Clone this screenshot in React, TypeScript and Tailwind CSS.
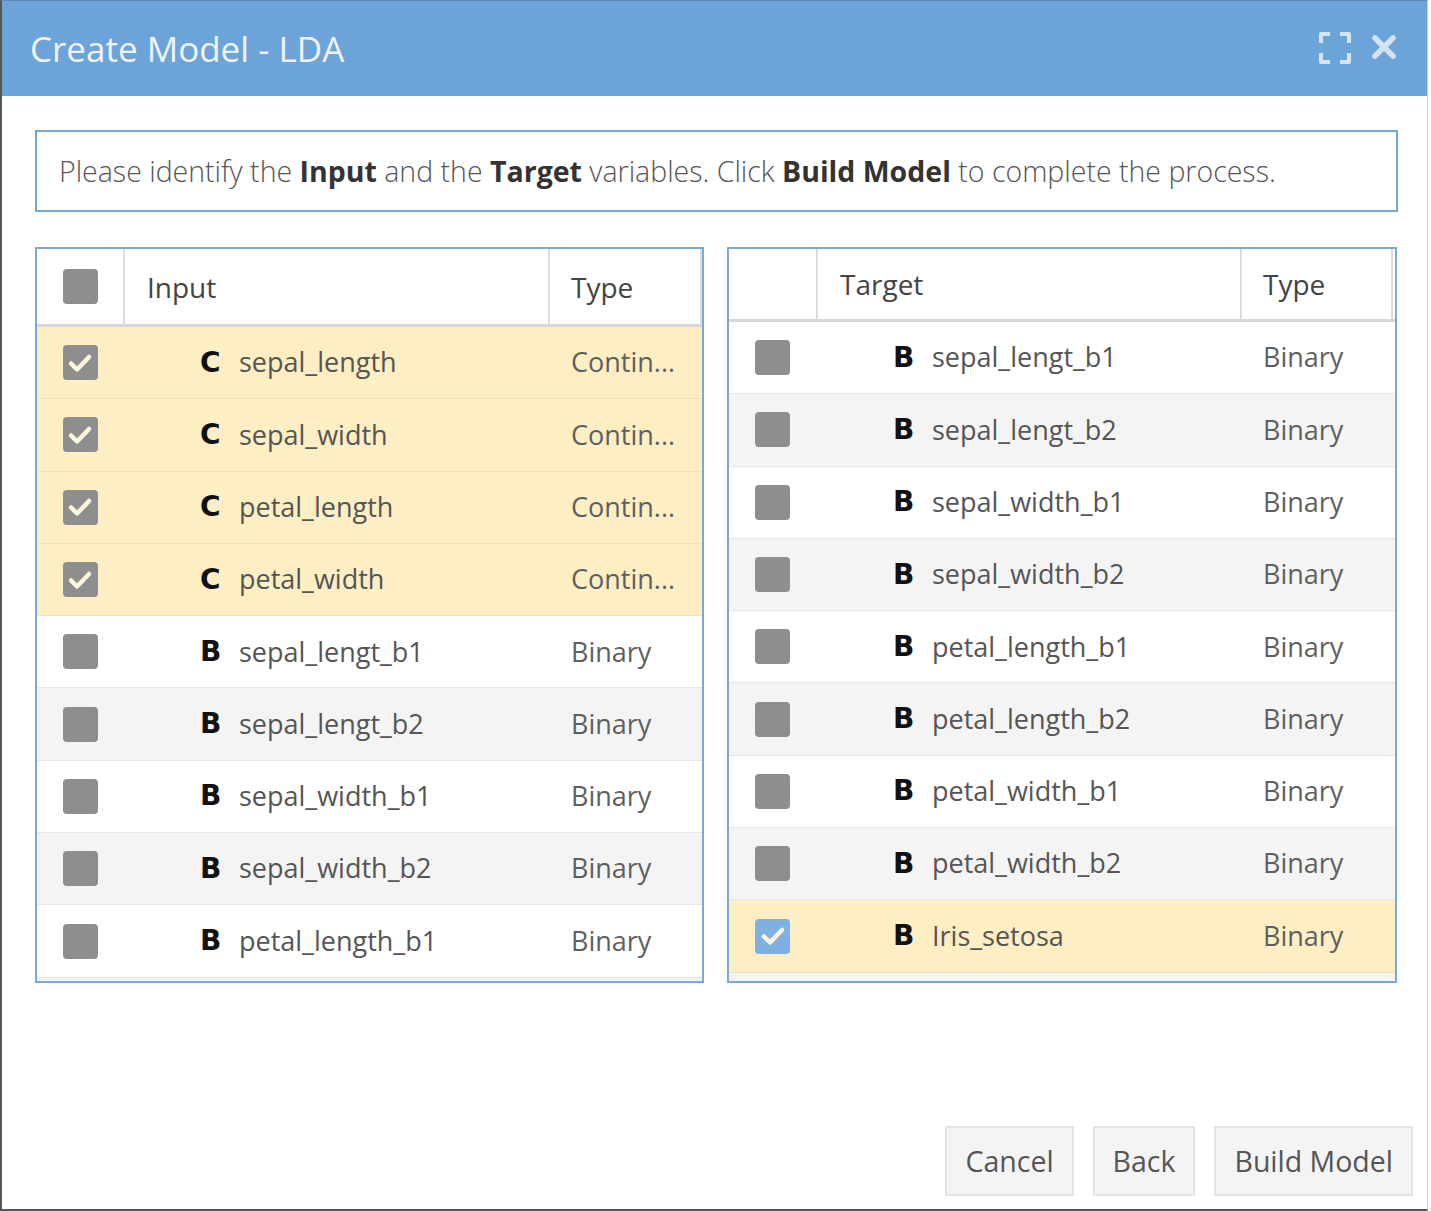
import React from "react";

type Row = { name: string; kind: "C" | "B"; type: string; checked?: boolean; empty?: boolean };

const leftRows: Row[] = [
  { name: "sepal_length", kind: "C", type: "Contin...", checked: true },
  { name: "sepal_width", kind: "C", type: "Contin...", checked: true },
  { name: "petal_length", kind: "C", type: "Contin...", checked: true },
  { name: "petal_width", kind: "C", type: "Contin...", checked: true },
  { name: "sepal_lengt_b1", kind: "B", type: "Binary" },
  { name: "sepal_lengt_b2", kind: "B", type: "Binary" },
  { name: "sepal_width_b1", kind: "B", type: "Binary" },
  { name: "sepal_width_b2", kind: "B", type: "Binary" },
  { name: "petal_length_b1", kind: "B", type: "Binary" },
  { name: "", kind: "B", type: "", empty: true },
];

const rightRows: Row[] = [
  { name: "sepal_lengt_b1", kind: "B", type: "Binary" },
  { name: "sepal_lengt_b2", kind: "B", type: "Binary" },
  { name: "sepal_width_b1", kind: "B", type: "Binary" },
  { name: "sepal_width_b2", kind: "B", type: "Binary" },
  { name: "petal_length_b1", kind: "B", type: "Binary" },
  { name: "petal_length_b2", kind: "B", type: "Binary" },
  { name: "petal_width_b1", kind: "B", type: "Binary" },
  { name: "petal_width_b2", kind: "B", type: "Binary" },
  { name: "Iris_setosa", kind: "B", type: "Binary", checked: true },
  { name: "", kind: "B", type: "", empty: true },
];

function Check({ checked, blue }: { checked?: boolean; blue?: boolean }) {
  return (
    <div
      className={
        "w-[35px] h-[35px] rounded-[4px] flex items-center justify-center " +
        (checked && blue ? "bg-[#7eb0e2]" : "bg-[#8e8e8e]")
      }
    >
      {checked && (
        <svg width="26" height="26" viewBox="0 0 26 26">
          <polyline
            points="4,13.5 10,19.5 22,7"
            fill="none"
            stroke="#fdf4dc"
            strokeWidth="4.5"
            strokeLinecap="round"
            strokeLinejoin="round"
          />
        </svg>
      )}
    </div>
  );
}

function Table({
  title,
  rows,
  headerH,
  headerCheck,
  blue,
  cols,
}: {
  title: string;
  rows: Row[];
  headerH: string;
  headerCheck?: boolean;
  blue?: boolean;
  cols: [string, string, string];
}) {
  return (
    <div className="h-[736px] border-2 border-[#7aa8db] flex flex-col overflow-hidden bg-[#f4f4f4]">
      <div className={"flex shrink-0 bg-white border-b-[3px] border-[#d8d8d8] " + headerH}>
        <div className={"flex items-center justify-center shrink-0 " + cols[0]}>
          {headerCheck && <Check />}
        </div>
        <div className={"flex items-center border-l-2 border-[#dcdcdc] pl-[22px] text-[28px] text-[#444] shrink-0 " + cols[1]}>
          {title}
        </div>
        <div className={"flex items-center border-l-2 border-r-2 border-[#dcdcdc] pl-[21px] text-[28px] text-[#444] shrink-0 " + cols[2]}>
          Type
        </div>
      </div>
      <div className="flex flex-col">
        {rows.map((r, i) => {
          const bg = r.checked
            ? "bg-[#fdeec4] border-[#f1e2b6]"
            : i % 2 === 1
            ? "bg-[#f4f4f4] border-[#e6e6e6]"
            : "bg-white border-[#e6e6e6]";
          if (r.empty) {
            return <div key={i} className={"h-[72.3px] shrink-0 border-b " + bg} />;
          }
          return (
            <div key={i} className={"flex h-[72.3px] shrink-0 border-b " + bg}>
              <div className={"flex items-center justify-center shrink-0 " + cols[0]}>
                <Check checked={r.checked} blue={blue} />
              </div>
              <div className={"flex items-center pl-[77px] shrink-0 " + cols[1]}>
                <span className="font-['DejaVu_Sans',sans-serif] font-bold text-[28px] text-[#111] w-[39px] leading-none">
                  {r.kind}
                </span>
                <span className="text-[27px] text-[#555]">{r.name}</span>
              </div>
              <div className={"flex items-center pl-[23px] text-[27px] text-[#5f5f5f] shrink-0 " + cols[2]}>
                {r.type}
              </div>
            </div>
          );
        })}
      </div>
    </div>
  );
}

export default function App() {
  return (
    <div className="w-[1428px] h-[1211px] border-l-2 border-b-2 border-t border-r border-l-[#555] border-b-[#555] border-t-[#5f86b0] border-r-[#cfcfcf] bg-white flex flex-col font-['Open_Sans',sans-serif] overflow-hidden">
      <div className="h-[95px] shrink-0 bg-[#6ca3d9] flex items-center justify-between pl-[28px] pr-[30px]">
        <div className="text-[35px] text-[#eef3f8] leading-none">Create Model - LDA</div>
        <div className="flex items-center gap-[20px]">
          <svg width="32" height="32" viewBox="0 0 32 32" className="mt-[-2px]">
            <path
              d="M2 11V2H11M21 2H30V11M30 21V30H21M11 30H2V21"
              fill="none"
              stroke="#d7e3ef"
              strokeWidth="4"
              strokeLinejoin="round"
            />
          </svg>
          <svg width="26" height="26" viewBox="0 0 26 26" className="mt-[-4px]">
            <path
              d="M4 4L22 22M22 4L4 22"
              fill="none"
              stroke="#d7e3ef"
              strokeWidth="5.5"
              strokeLinecap="round"
            />
          </svg>
        </div>
      </div>
      <div className="flex-1 flex flex-col pl-[33px] pr-[30px]">
        <div className="mt-[34px] h-[82px] w-[1363px] border-2 border-[#72a5dc] flex items-center pl-[22px] text-[28.5px] text-[#555] font-light whitespace-nowrap">
          <span>
            Please identify the <b className="font-bold text-[#333]">Input</b> and the{" "}
            <b className="font-bold text-[#333]">Target</b> variables. Click{" "}
            <b className="font-bold text-[#333]">Build Model</b> to complete the process.
          </span>
        </div>
        <div className="mt-[35px] flex gap-[23px]">
          <div className="w-[669px]">
            <Table
              title="Input"
              rows={leftRows}
              headerH="h-[78px]"
              headerCheck
              cols={["w-[86px]", "w-[425px]", "w-[154px]"]}
            />
          </div>
          <div className="w-[671px]">
            <Table
              title="Target"
              rows={rightRows}
              headerH="h-[73px]"
              blue
              cols={["w-[87px]", "w-[424px]", "w-[153px]"]}
            />
          </div>
        </div>
        <div className="flex-1" />
        <div className="flex justify-end gap-[19px] pb-[13px] mr-[-16px]">
          {["Cancel", "Back", "Build Model"].map((t) => (
            <div
              key={t}
              className="h-[70px] px-[18px] flex items-center border-2 border-[#e4e4e4] bg-[#f4f4f4] text-[28.5px] text-[#555]"
            >
              {t}
            </div>
          ))}
        </div>
      </div>
    </div>
  );
}
